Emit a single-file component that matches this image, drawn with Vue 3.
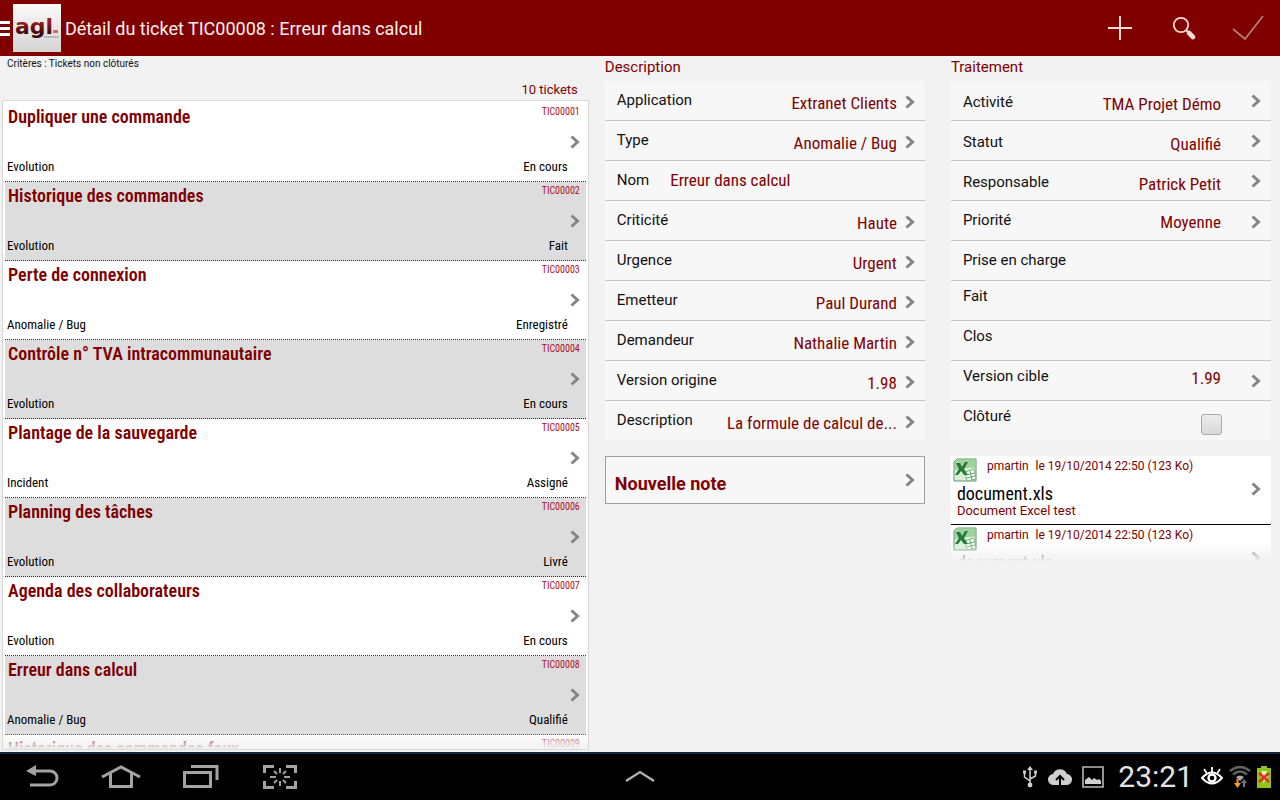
<template>
  <div class="app">
    <header class="topbar">
      <button class="menu-btn" aria-label="Menu"><i></i><i></i><i></i></button>
      <svg class="logo" viewBox="0 0 48 48" role="img" aria-label="agl">
        <defs>
          <linearGradient id="logoBg" x1="0" y1="0" x2="0" y2="1">
            <stop offset="0" stop-color="#fafafa" />
            <stop offset="1" stop-color="#d4d4d4" />
          </linearGradient>
          <linearGradient id="logoInk" x1="0" y1="0" x2="0" y2="1">
            <stop offset="0.3" stop-color="#a01c1c" />
            <stop offset="0.8" stop-color="#3c0808" />
          </linearGradient>
        </defs>
        <rect width="48" height="48" fill="url(#logoBg)" />
        <text x="2" y="30" class="logo-text" fill="url(#logoInk)">agl</text>
        <rect x="40" y="26" width="5" height="3" rx="1" fill="#c96a50" />
        <path d="M31 33h15" stroke="#aaa" stroke-width="2" stroke-dasharray="1.5 0.6" />
      </svg>
      <h1 class="title">Détail du ticket TIC00008 : Erreur dans calcul</h1>
      <nav class="actions">
        <button class="action" aria-label="Ajouter">
          <svg width="32" height="32" viewBox="0 0 32 32"><path d="M16 4v24M4 16h24" stroke="#ffd9d4" stroke-width="2" fill="none" /></svg>
        </button>
        <button class="action" aria-label="Rechercher">
          <svg width="32" height="32" viewBox="0 0 32 32">
            <circle cx="13" cy="13" r="7.2" stroke="#ffd9d4" stroke-width="1.8" fill="none" />
            <path d="M18 18l3 3" stroke="#ffd9d4" stroke-width="2" />
            <path d="M21 21l4 4" stroke="#ffd9d4" stroke-width="4.6" stroke-linecap="round" />
          </svg>
        </button>
        <button class="action" aria-label="Valider">
          <svg width="32" height="32" viewBox="0 0 32 32"><path d="M1 17l12 10L31 4" stroke="#b08078" stroke-width="1.8" fill="none" /></svg>
        </button>
      </nav>
    </header>

    <main class="content">
      <section class="list-pane">
        <p class="criteria">Critères : Tickets non clôturés</p>
        <p class="count">10 tickets</p>
        <div class="ticket-box">
          <ul class="tickets">
            <li v-for="t in tickets" :key="t.id">
              <button class="ticket">
                <span class="line">
                  <strong class="ticket-name">{{ t.name }}</strong>
                  <span class="ticket-id">{{ t.id }}</span>
                </span>
                <svg class="chevron" viewBox="0 0 10 14"><path d="M1.5 1.5L7.5 7l-6 5.5" /></svg>
                <span class="line bottom">
                  <span>{{ t.type }}</span>
                  <span>{{ t.status }}</span>
                </span>
              </button>
            </li>
          </ul>
        </div>
      </section>

      <div class="details">
        <section class="column">
          <h2 class="heading">Description</h2>
          <div class="panel">
            <template v-for="f in description" :key="f.label">
              <div v-if="f.input" class="field">
                <label class="label" for="nom">{{ f.label }}</label>
                <input id="nom" v-model="f.value" class="value name-input" type="text" />
              </div>
              <button v-else class="field">
                <span class="label">{{ f.label }}</span>
                <span class="value">{{ f.value }}</span>
                <svg class="chevron" viewBox="0 0 10 14"><path d="M1.5 1.5L7.5 7l-6 5.5" /></svg>
              </button>
            </template>
          </div>
          <button class="new-note">
            <span>Nouvelle note</span>
            <svg class="chevron" viewBox="0 0 10 14"><path d="M1.5 1.5L7.5 7l-6 5.5" /></svg>
          </button>
        </section>

        <section class="column processing">
          <h2 class="heading">Traitement</h2>
          <div class="panel">
            <button v-for="f in processing" :key="f.label" class="field" :class="f.align">
              <span class="label">{{ f.label }}</span>
              <span class="value">{{ f.value }}</span>
              <svg v-if="f.value" class="chevron" viewBox="0 0 10 14"><path d="M1.5 1.5L7.5 7l-6 5.5" /></svg>
            </button>
            <div class="field high">
              <label class="label" for="closed">Clôturé</label>
              <input id="closed" v-model="closed" class="check" type="checkbox" />
            </div>
          </div>
          <ul class="documents">
            <li v-for="n in 2" :key="n">
              <button class="document">
                <svg class="xls" width="24" height="24" viewBox="0 0 24 24">
                  <path d="M4 1h19v22H1V4z" fill="#d9efd5" stroke="#5c9a68" />
                  <path d="M4 2h18v8C15 9 8 12 2 12V4z" fill="#9ed3a0" />
                  <path d="M12 14l9-3 2 10-9 2z" fill="#fff" stroke="#7bb083" />
                  <path d="M14 17l7-2M14 20l8-2M17 13l2 9" stroke="#5faa68" />
                  <path d="M3 5h4l2 4 3-5h3l-4 7 4 6h-4l-3-4-3 4H2l4-6z" fill="#277a35" />
                </svg>
                <span class="doc-text">
                  <span class="doc-meta"><span>pmartin</span><span>le 19/10/2014 22:50 (123 Ko)</span></span>
                  <span class="doc-name">document.xls</span>
                  <span class="doc-desc">Document Excel test</span>
                </span>
                <svg class="chevron" viewBox="0 0 10 14"><path d="M1.5 1.5L7.5 7l-6 5.5" /></svg>
              </button>
            </li>
          </ul>
        </section>
      </div>
    </main>

    <footer class="navbar">
      <div class="nav-left">
        <button aria-label="Retour">
          <svg width="40" height="28" viewBox="0 0 40 28">
            <path d="M11 8h18a6.5 6.5 0 0 1 0 14H9" fill="none" stroke="#a3a3a3" stroke-width="3" />
            <path d="M5 8l10-6v11z" fill="#a3a3a3" />
          </svg>
        </button>
        <button aria-label="Accueil">
          <svg width="40" height="28" viewBox="0 0 40 28">
            <path d="M1 14L20 4l19 10M9.5 10v13.500h21V10" fill="none" stroke="#a3a3a3" stroke-width="3" />
          </svg>
        </button>
        <button aria-label="Applications récentes">
          <svg width="40" height="28" viewBox="0 0 40 28">
            <path d="M3.500 9.500h26v14h-26z" fill="none" stroke="#a3a3a3" stroke-width="3" />
            <path d="M10 3.500h26V17" fill="none" stroke="#a3a3a3" stroke-width="3" />
          </svg>
        </button>
        <button aria-label="Capture">
          <svg width="40" height="28" viewBox="0 0 40 28" fill="none" stroke="#a3a3a3">
            <path d="M3.500 10V3.500H13M25 3.500h9.500V10M34.500 18v6.500H25M13 24.500H3.500V18" stroke-width="3" />
            <path d="M19 5v5M19 18v5M9 14h6M23 14h6M13 8l3 3M25 8l-3 3M13 20l3-3M25 20l-3-3" stroke-width="2" />
          </svg>
        </button>
      </div>
      <button class="nav-up" aria-label="Ouvrir">
        <svg width="32" height="14" viewBox="0 0 32 14"><path d="M2 11L16 2l14 9" fill="none" stroke="#b4b4b4" stroke-width="2.2" /></svg>
      </button>
      <div class="status">
        <div class="notifications">
          <svg width="16" height="22" viewBox="0 0 16 22" fill="none" stroke="#cfcfcf" stroke-width="1.5">
            <path d="M8 3v15M2.500 7v4L8 15M13.500 6v4L8 13" />
            <path d="M8 0l3 4H5z" fill="#cfcfcf" stroke="none" />
            <circle cx="8" cy="19" r="2.4" fill="#cfcfcf" stroke="none" />
            <path d="M1 6h3M12 6h3" stroke-width="3" />
          </svg>
          <svg width="24" height="18" viewBox="0 0 24 18">
            <path d="M6 17a5.500 5.500 0 0 1-1-11A7.500 7.500 0 0 1 19 6a5.500 5.500 0 0 1-1 11z" fill="#cfcfcf" />
            <path d="M12 17V9M8 12l4-4 4 4" fill="none" stroke="#000" stroke-width="2" />
          </svg>
          <svg width="22" height="22" viewBox="0 0 22 22">
            <path d="M1 1h20v20H1z" fill="none" stroke="#b8b8b8" stroke-width="1.6" />
            <path d="M3 18v-4l4-3 3 3 2-2 3 2 2-1 2 2v3z" fill="#d0d0d0" />
          </svg>
        </div>
        <time class="clock">23:21</time>
        <svg width="22" height="20" viewBox="0 0 22 20" fill="none" stroke="#fff">
          <path d="M1 11q10-11 20 0q-10 11-20 0z" stroke-width="2" />
          <path d="M11 5V0M5.500 6L3 2M16.500 6L19 2" stroke-width="1.8" />
          <circle cx="11" cy="11" r="3.5" stroke-width="2.4" />
        </svg>
        <svg width="22" height="24" viewBox="0 0 22 24" fill="none">
          <path d="M1 6q10-8 20 0M4 9.500q7-6 14 0" stroke="#606060" stroke-width="2.6" />
          <path d="M7 12q4-3 8 0l-4 4z" fill="#aaa" />
          <path d="M8.500 14v5" stroke="#f09a2a" stroke-width="2" /><path d="M5 18h7l-3.500 5z" fill="#f09a2a" />
          <path d="M15 22v-5" stroke="#777" stroke-width="2" /><path d="M12 18h6l-3-4z" fill="#777" />
        </svg>
        <svg width="14" height="22" viewBox="0 0 14 22">
          <path d="M4 0h6v2h4v20H0V2h4z" fill="#8fc31a" />
          <path d="M5 5h5l-1 5h2l-5 8 1-6H4z" fill="#e8f0c0" />
          <path d="M2 7l10 9M12 7L2 16" stroke="#e03020" stroke-width="2.4" />
        </svg>
      </div>
    </footer>
  </div>
</template>

<script setup>
import { ref } from 'vue'

const tickets = [
  { id: 'TIC00001', name: 'Dupliquer une commande', type: 'Evolution', status: 'En cours' },
  { id: 'TIC00002', name: 'Historique des commandes', type: 'Evolution', status: 'Fait' },
  { id: 'TIC00003', name: 'Perte de connexion', type: 'Anomalie / Bug', status: 'Enregistré' },
  { id: 'TIC00004', name: 'Contrôle n° TVA intracommunautaire', type: 'Evolution', status: 'En cours' },
  { id: 'TIC00005', name: 'Plantage de la sauvegarde', type: 'Incident', status: 'Assigné' },
  { id: 'TIC00006', name: 'Planning des tâches', type: 'Evolution', status: 'Livré' },
  { id: 'TIC00007', name: 'Agenda des collaborateurs', type: 'Evolution', status: 'En cours' },
  { id: 'TIC00008', name: 'Erreur dans calcul', type: 'Anomalie / Bug', status: 'Qualifié' },
  { id: 'TIC00009', name: 'Historique des commandes faux', type: '', status: '' },
]

const description = ref([
  { label: 'Application', value: 'Extranet Clients' },
  { label: 'Type', value: 'Anomalie / Bug' },
  { label: 'Nom', value: 'Erreur dans calcul', input: true },
  { label: 'Criticité', value: 'Haute' },
  { label: 'Urgence', value: 'Urgent' },
  { label: 'Emetteur', value: 'Paul Durand' },
  { label: 'Demandeur', value: 'Nathalie Martin' },
  { label: 'Version origine', value: '1.98' },
  { label: 'Description', value: 'La formule de calcul de...' },
])

const processing = [
  { label: 'Activité', value: 'TMA Projet Démo', align: 'low' },
  { label: 'Statut', value: 'Qualifié', align: 'low' },
  { label: 'Responsable', value: 'Patrick Petit', align: 'low' },
  { label: 'Priorité', value: 'Moyenne' },
  { label: 'Prise en charge', value: '' },
  { label: 'Fait', value: '', align: 'high' },
  { label: 'Clos', value: '', align: 'high' },
  { label: 'Version cible', value: '1.99', align: 'high' },
]

const closed = ref(false)
</script>

<style>
body { margin: 0; }
</style>

<style scoped>
* { box-sizing: border-box; }
.app {
  height: 100vh;
  display: flex;
  flex-direction: column;
  background: #f2f2f2;
  color: #111;
  font-family: Roboto, "Liberation Sans", sans-serif;
  overflow: hidden;
}
button {
  border: 0;
  padding: 0;
  background: none;
  color: inherit;
  font: inherit;
  text-align: left;
  cursor: pointer;
}
h1, h2, p, ul { margin: 0; padding: 0; list-style: none; }
svg { display: block; flex: none; }

.topbar {
  flex: none;
  display: flex;
  align-items: center;
  height: 56px;
  background: #800000;
  color: #fff0ee;
}
.menu-btn { display: flex; flex-direction: column; gap: 3px; width: 13px; }
.menu-btn i { width: 10px; height: 3px; background: #fff; }
.logo { width: 48px; height: 48px; }
.logo-text { font: bold 22px "DejaVu Sans", sans-serif; }
.title { flex: 1; padding-left: 4px; font-size: 18px; font-weight: 400; }
.actions { display: flex; }
.action { display: flex; justify-content: center; width: 64px; }

.content { flex: 1; min-height: 0; display: flex; }
.list-pane { width: 46%; padding: 0 0 2px 2px; display: flex; flex-direction: column; }
.criteria { padding: 1px 5px 0; font-size: 10px; line-height: 14px; }
.count { padding: 10px 11px 2px; font-size: 13px; line-height: 17px; text-align: right; color: #800000; }
.ticket-box {
  position: relative;
  flex: 1;
  min-height: 0;
  overflow: hidden;
  border: 1px solid #d8d8d8;
  padding: 2px;
  background: #fff;
}
.ticket-box::after, .documents::after {
  content: "";
  position: absolute;
  left: 0;
  right: 0;
  bottom: 0;
  height: 18px;
  background: linear-gradient(rgba(242, 242, 242, 0), #f2f2f2);
  pointer-events: none;
}
.tickets li { border-bottom: 1px dotted #a00000; }
.tickets li:nth-child(even) { background: #ddd; }
.ticket { display: flex; flex-direction: column; width: 100%; height: 78px; padding: 4px 6px 6px 3px; }
.line { display: flex; justify-content: space-between; width: 100%; }
.ticket-name, .ticket-id, .bottom, .value, .doc-name { font-family: "Roboto Condensed", "Liberation Sans Narrow", Roboto, sans-serif; }
.ticket-name { font-size: 18px; font-weight: 600; line-height: 20px; color: #800000; }
.ticket-id { font-size: 10px; line-height: 10px; color: #b01020; }
.ticket .chevron { align-self: flex-end; margin-top: 8px; }
.bottom { margin: auto 0 0 -1px; padding-right: 11px; font-size: 13px; line-height: 16px; color: #000; }

.chevron { width: 10px; height: 14px; }
.chevron path { fill: none; stroke: #858585; stroke-width: 3; }

.details { flex: 1; display: grid; grid-template-columns: 1fr 1fr; gap: 26px; padding: 0 9px 0 16px; align-items: start; }
.column { min-width: 0; }
.heading { padding: 1px 0 4px; font-size: 15px; font-weight: 400; line-height: 20px; color: #800000; }
.panel { background: #f7f7f7; }
.field {
  display: flex;
  align-items: flex-start;
  width: 100%;
  height: 40px;
  padding: 9px 10px 0 12px;
  border-bottom: 1px solid #c6c6c6;
}
.panel .field:last-child { border-bottom-color: transparent; }
.field.low { padding-top: 11px; }
.field.high { padding-top: 5px; }
.label { font-size: 15px; line-height: 20px; }
.value { flex: 1; padding-top: 3px; font-size: 17px; line-height: 20px; text-align: right; color: #800000; white-space: nowrap; }
.chevron { flex: none; }
.field .chevron { margin: 5px 0 0 8px; }
.processing .value { padding-top: 2px; }
.processing .field .chevron { margin-left: 30px; }
.field.low .chevron { margin-top: 2px; }
.field.high .chevron { margin-top: 8px; }
.value.name-input { min-width: 0; margin-left: 21px; padding: 0; border: 0; outline: 0; background: none; text-align: left; }
.check {
  appearance: none;
  width: 21px;
  height: 21px;
  margin: 8px 39px 0 auto;
  border: 1px solid #aaa;
  border-radius: 3px;
  background: linear-gradient(#ededed, #d8d8d8);
}
.new-note {
  display: flex;
  align-items: flex-start;
  justify-content: space-between;
  width: 100%;
  height: 48px;
  margin-top: 15px;
  padding: 16px 9px 0;
  border: 1px solid #a0a0a0;
  background: #f7f7f7;
  font-size: 18px;
  font-weight: 700;
  line-height: 22px;
  color: #800000;
}

.documents { position: relative; height: 105px; margin-top: 15px; overflow: hidden; }
.documents li { background: #fff; border-bottom: 1px solid #000; }
.document { position: relative; display: flex; align-items: center; width: 100%; height: 68px; padding: 0 10px 2px 6px; }
.xls { position: absolute; left: 2px; top: 2px; }
.doc-text { flex: 1; align-self: flex-start; display: flex; flex-direction: column; padding-top: 2px; }
.doc-meta { display: flex; gap: 7px; padding-left: 30px; font-size: 12px; line-height: 16px; color: #800000; }
.doc-name { padding-top: 10px; font-size: 18px; line-height: 20px; color: #000; }
.doc-desc { font-size: 13px; line-height: 14px; color: #800000; }

.navbar {
  flex: none;
  display: grid;
  grid-template-columns: 1fr auto 1fr;
  align-items: center;
  height: 48px;
  border-top: 2px solid #12283a;
  background: #000;
}
.nav-left { display: flex; gap: 40px; padding-left: 21px; }
.status { display: flex; align-items: center; justify-content: flex-end; gap: 6px; padding-right: 9px; }
.notifications { display: flex; align-items: center; gap: 10px; padding-right: 8px; }
.clock { padding-right: 2px; font-size: 30px; line-height: 40px; color: #e4e4e4; }
</style>
